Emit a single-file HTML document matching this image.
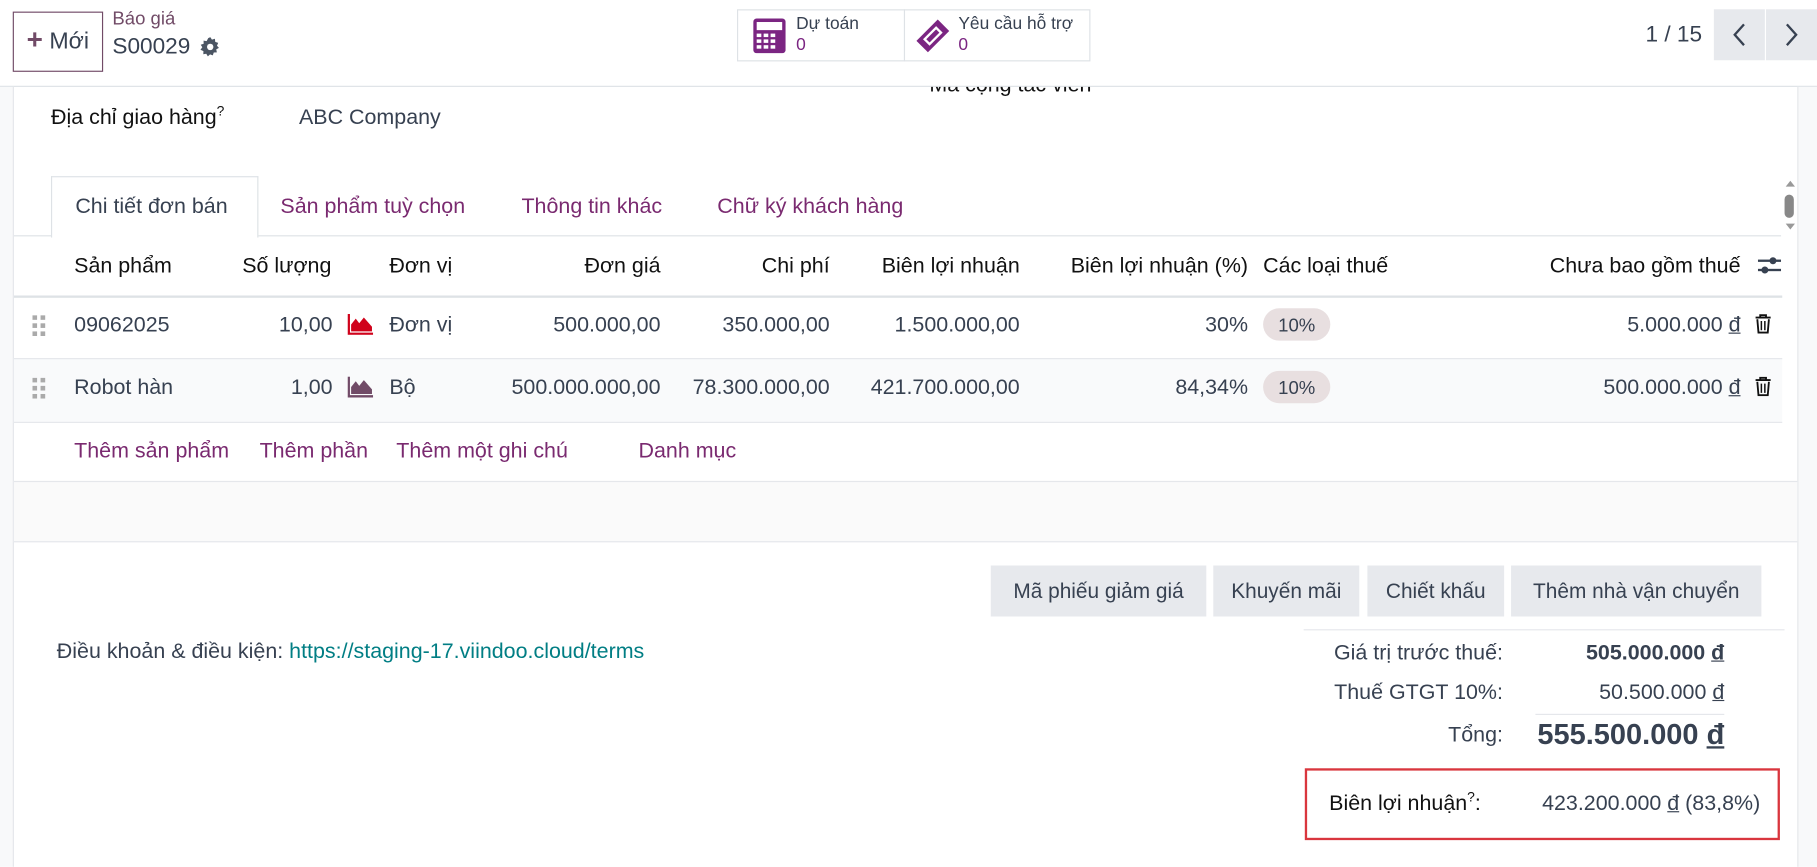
<!DOCTYPE html>
<html><head><meta charset="utf-8"><style>
html,body{margin:0;padding:0;width:1817px;height:867px;overflow:hidden;background:#fff;}
#w{position:absolute;left:0;top:0;width:1568px;height:748px;transform:scale(1.15880);transform-origin:0 0;font-family:"Liberation Sans",sans-serif;color:#374151;font-size:18.5px;}
.t{position:absolute;white-space:nowrap;line-height:20px;}
.r{text-align:right;}
.p{color:#7a2a70;}
.ab{position:absolute;}
.btn{position:absolute;background:#e7e9ed;color:#374151;height:44px;line-height:44px;text-align:center;font-size:18px;}
u{text-decoration:underline;}
sup{line-height:0;font-size:12px;}
</style></head><body><div id="w">
<div class="ab" style="left:0;top:0;width:1568px;height:74px;background:#fff;border-bottom:1px solid #dee2e6;"></div>
<div class="ab" style="left:11px;top:10px;width:76px;height:50px;border:1px solid #714b67;"></div>
<div class="t" style="left:23px;top:25px;font-size:20px;color:#714b67;"><b style="font-size:24px">+</b> <span style="color:#374151">Mới</span></div>
<div class="t" style="left:97px;top:7px;font-size:16px;color:#714b67">Báo giá</div>
<div class="t" style="left:97px;top:30px;font-size:19.5px;color:#374151;">S00029</div>
<svg class="ab" style="left:173px;top:32px" width="17" height="17" viewBox="0 0 16 16"><path fill="#4b5563" d="M8 0l1.3 2.1 2.4-.7.3 2.5 2.4.8-1 2.3L15 8.8l-2.2 1.2.5 2.4-2.5.1-.8 2.4L7.8 14 6 15.7 4.7 13.5l-2.4.4.1-2.5L0 10.3l1.5-2L.2 6.2l2.4-.8-.1-2.5 2.5.4L6.3.8z"/><circle cx="7.9" cy="8" r="2.6" fill="#fff"/></svg>
<div class="ab" style="left:636px;top:8px;width:303px;height:43px;border:1px solid #dee2e6;"></div>
<div class="ab" style="left:780px;top:8px;width:1px;height:45px;background:#dee2e6;"></div>
<svg class="ab" style="left:650px;top:16px" width="28" height="30" viewBox="0 0 28 30"><rect x="0" y="0" width="28" height="30" rx="3" fill="#7b2582"/><rect x="3" y="3" width="22" height="7" fill="#fff"/><g fill="#fff"><rect x="3" y="13" width="4" height="3"/><rect x="9" y="13" width="4" height="3"/><rect x="15" y="13" width="4" height="3"/><rect x="3" y="18" width="4" height="3"/><rect x="9" y="18" width="4" height="3"/><rect x="15" y="18" width="4" height="3"/><rect x="3" y="23" width="4" height="3"/><rect x="9" y="23" width="4" height="3"/><rect x="15" y="23" width="4" height="3"/></g></svg>
<div class="t" style="left:687px;top:11px;font-size:15px;">Dự toán</div>
<div class="t" style="left:687px;top:29px;font-size:15px;color:#7b2582">0</div>
<svg class="ab" style="left:790px;top:16px" width="30" height="30" viewBox="0 0 30 30"><g transform="rotate(-45 15 15)"><rect x="2" y="8" width="26" height="14" fill="#7b2582"/><rect x="7" y="11" width="16" height="8" fill="#fff"/><rect x="9" y="13" width="12" height="4" fill="#7b2582"/></g></svg>
<div class="t" style="left:827px;top:11px;font-size:15px;">Yêu cầu hỗ trợ</div>
<div class="t" style="left:827px;top:29px;font-size:15px;color:#7b2582">0</div>
<div class="t" style="left:1420px;top:20px;font-size:19.5px;">1 / 15</div>
<div class="ab" style="left:1479px;top:8px;width:44px;height:44px;background:#e7e9ed;"></div>
<div class="ab" style="left:1524px;top:8px;width:44px;height:44px;background:#e7e9ed;"></div>
<svg class="ab" style="left:1493px;top:19px" width="16" height="22" viewBox="0 0 16 22"><path d="M12 2L4 11l8 9" stroke="#374151" stroke-width="2" fill="none"/></svg>
<svg class="ab" style="left:1538px;top:19px" width="16" height="22" viewBox="0 0 16 22"><path d="M4 2l8 9-8 9" stroke="#374151" stroke-width="2" fill="none"/></svg>
<div class="ab" style="left:0;top:75px;width:11px;height:673px;background:#f8f9fa;border-right:1px solid #e5e7eb;"></div>
<div class="ab" style="left:1551px;top:75px;width:17px;height:673px;background:#f8f9fa;border-left:1px solid #e5e7eb;"></div>
<div class="ab" style="left:12px;top:75px;width:1538px;height:8px;overflow:hidden;"><div class="t" style="left:790px;top:-12px;color:#111;">Mã cộng tác viên</div></div>
<div class="t" style="left:44px;top:91px;color:#111;">Địa chỉ giao hàng<sup>?</sup></div>
<div class="t" style="left:258px;top:91px;">ABC Company</div>
<div class="ab" style="left:12px;top:203px;width:1525px;height:1px;background:#dee2e6;"></div>
<div class="ab" style="left:44px;top:152px;width:177px;height:52px;background:#fff;border:1px solid #dee2e6;border-bottom:none;"></div>
<div class="t" style="left:65px;top:168px;">Chi tiết đơn bán</div>
<div class="t p" style="left:242px;top:168px;">Sản phẩm tuỳ chọn</div>
<div class="t p" style="left:450px;top:168px;">Thông tin khác</div>
<div class="t p" style="left:619px;top:168px;">Chữ ký khách hàng</div>
<div class="ab" style="left:1541px;top:156px;width:0;height:0;border:4px solid transparent;border-bottom:5px solid #999;border-top:none;"></div>
<div class="ab" style="left:1540px;top:168px;width:8px;height:20px;border-radius:4px;background:#888;"></div>
<div class="ab" style="left:1541px;top:193px;width:0;height:0;border:4px solid transparent;border-top:5px solid #999;border-bottom:none;"></div>
<div class="t" style="left:64px;top:219px;color:#111;">Sản phẩm</div>
<div class="t" style="left:209px;top:219px;color:#111;">Số lượng</div>
<div class="t" style="left:336px;top:219px;color:#111;">Đơn vị</div>
<div class="t r" style="right:998px;top:219px;color:#111;">Đơn giá</div>
<div class="t r" style="right:852px;top:219px;color:#111;">Chi phí</div>
<div class="t r" style="right:688px;top:219px;color:#111;">Biên lợi nhuận</div>
<div class="t r" style="right:491px;top:219px;color:#111;">Biên lợi nhuận (%)</div>
<div class="t" style="left:1090px;top:219px;color:#111;">Các loại thuế</div>
<div class="t r" style="right:66px;top:219px;color:#111;">Chưa bao gồm thuế</div>
<svg class="ab" style="left:1517px;top:220px" width="20" height="18" viewBox="0 0 20 18"><g fill="#374151"><rect x="0" y="4" width="20" height="2"/><rect x="0" y="12" width="20" height="2"/><circle cx="13" cy="5" r="3"/><circle cx="6" cy="13" r="3"/></g></svg>
<div class="ab" style="left:12px;top:255px;width:1526px;height:2px;background:#dee2e6;"></div>
<svg class="ab" style="left:28px;top:272px" width="12" height="18"><g fill="#aaa"><rect x="0" y="0" width="4" height="4"/><rect x="7" y="0" width="4" height="4"/><rect x="0" y="7" width="4" height="4"/><rect x="7" y="7" width="4" height="4"/><rect x="0" y="14" width="4" height="4"/><rect x="7" y="14" width="4" height="4"/></g></svg>
<div class="t" style="left:64px;top:270px;">09062025</div>
<div class="t r" style="right:1281px;top:270px;">10,00</div>
<svg class="ab" style="left:300px;top:271px" width="22" height="18" viewBox="0 0 22 18"><path d="M1 0v17h21" stroke="#d0021b" stroke-width="2" fill="none"/><path d="M3 15V9l4-5 3 4 4-5 7 8v4z" fill="#d0021b"/></svg>
<div class="t" style="left:336px;top:270px;">Đơn vị</div>
<div class="t r" style="right:998px;top:270px;">500.000,00</div>
<div class="t r" style="right:852px;top:270px;">350.000,00</div>
<div class="t r" style="right:688px;top:270px;">1.500.000,00</div>
<div class="t r" style="right:491px;top:270px;">30%</div>
<div class="ab" style="left:1090px;top:266px;width:58px;height:28px;border-radius:14px;background:#e8dfe0;"></div>
<div class="t" style="left:1103px;top:272px;font-size:16px;">10%</div>
<div class="t r" style="right:66px;top:270px;">5.000.000 <u>đ</u></div>
<svg class="ab" style="left:1514px;top:271px" width="15" height="17" viewBox="0 0 15 17"><path d="M1 3h13M5 3V1h5v2M2.5 4.5l1 11.5h8l1-11.5" stroke="#111" stroke-width="1.6" fill="none"/><path d="M6 6v8M9 6v8" stroke="#111" stroke-width="1.3"/></svg>
<div class="ab" style="left:12px;top:309px;width:1526px;height:54px;background:#f9fafb;border-top:1px solid #e5e7eb;border-bottom:1px solid #e5e7eb;"></div>
<svg class="ab" style="left:28px;top:326px" width="12" height="18"><g fill="#aaa"><rect x="0" y="0" width="4" height="4"/><rect x="7" y="0" width="4" height="4"/><rect x="0" y="7" width="4" height="4"/><rect x="7" y="7" width="4" height="4"/><rect x="0" y="14" width="4" height="4"/><rect x="7" y="14" width="4" height="4"/></g></svg>
<div class="t" style="left:64px;top:324px;">Robot hàn</div>
<div class="t r" style="right:1281px;top:324px;">1,00</div>
<svg class="ab" style="left:300px;top:325px" width="22" height="18" viewBox="0 0 22 18"><path d="M1 0v17h21" stroke="#714b67" stroke-width="2" fill="none"/><path d="M3 15V9l4-5 3 4 4-5 7 8v4z" fill="#714b67"/></svg>
<div class="t" style="left:336px;top:324px;">Bộ</div>
<div class="t r" style="right:998px;top:324px;">500.000.000,00</div>
<div class="t r" style="right:852px;top:324px;">78.300.000,00</div>
<div class="t r" style="right:688px;top:324px;">421.700.000,00</div>
<div class="t r" style="right:491px;top:324px;">84,34%</div>
<div class="ab" style="left:1090px;top:320px;width:58px;height:28px;border-radius:14px;background:#e8dfe0;"></div>
<div class="t" style="left:1103px;top:326px;font-size:16px;">10%</div>
<div class="t r" style="right:66px;top:324px;">500.000.000 <u>đ</u></div>
<svg class="ab" style="left:1514px;top:325px" width="15" height="17" viewBox="0 0 15 17"><path d="M1 3h13M5 3V1h5v2M2.5 4.5l1 11.5h8l1-11.5" stroke="#111" stroke-width="1.6" fill="none"/><path d="M6 6v8M9 6v8" stroke="#111" stroke-width="1.3"/></svg>
<div class="t p" style="left:64px;top:379px;">Thêm sản phẩm</div>
<div class="t p" style="left:224px;top:379px;">Thêm phần</div>
<div class="t p" style="left:342px;top:379px;">Thêm một ghi chú</div>
<div class="t p" style="left:551px;top:379px;">Danh mục</div>
<div class="ab" style="left:12px;top:415px;width:1539px;height:51px;background:#fafafa;border-top:1px solid #e5e7eb;border-bottom:1px solid #e5e7eb;"></div>
<div class="btn" style="left:855px;top:488px;width:186px;">Mã phiếu giảm giá</div>
<div class="btn" style="left:1047px;top:488px;width:126px;">Khuyến mãi</div>
<div class="btn" style="left:1180px;top:488px;width:118px;">Chiết khấu</div>
<div class="btn" style="left:1304px;top:488px;width:216px;">Thêm nhà vận chuyển</div>
<div class="ab" style="left:1125px;top:543px;width:415px;height:1px;background:#e5e7eb;"></div>
<div class="t" style="left:49px;top:552px;">Điều khoản &amp; điều kiện: <span style="color:#017e84">https://staging-17.viindoo.cloud/terms</span></div>
<div class="t r" style="right:271px;top:553px;">Giá trị trước thuế:</div>
<div class="t r" style="right:80px;top:553px;font-weight:bold;">505.000.000 <u>đ</u></div>
<div class="t r" style="right:271px;top:587px;">Thuế GTGT 10%:</div>
<div class="t r" style="right:80px;top:587px;">50.500.000 <u>đ</u></div>
<div class="ab" style="left:1325px;top:616px;width:163px;height:1px;background:#e5e7eb;"></div>
<div class="t r" style="right:271px;top:624px;">Tổng:</div>
<div class="t r" style="right:80px;top:621px;font-size:25px;font-weight:bold;line-height:26px;">555.500.000 <u>đ</u></div>
<div class="ab" style="left:1126px;top:663px;width:406px;height:58px;border:2px solid #d9363e;"></div>
<div class="t" style="left:1147px;top:683px;color:#111;">Biên lợi nhuận<sup>?</sup>:</div>
<div class="t r" style="right:49px;top:683px;">423.200.000 <u>đ</u> (83,8%)</div>
</div></body></html>
